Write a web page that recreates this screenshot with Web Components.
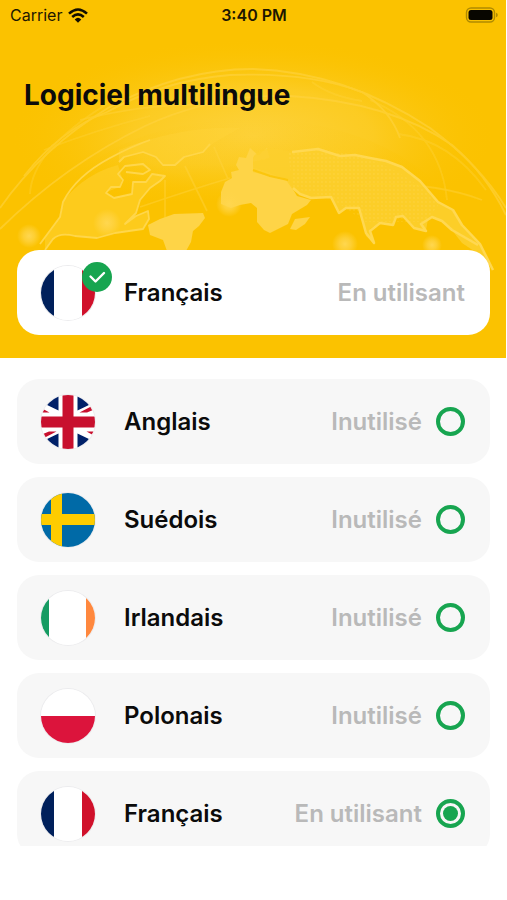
<!DOCTYPE html>
<html lang="fr">
<head>
<meta charset="utf-8">
<meta name="viewport" content="width=device-width, initial-scale=1">
<title>Logiciel multilingue</title>
<style>
  body { margin: 0; background: #fff; color: #0b0b0b; font-family: Inter, "Liberation Sans", sans-serif; }
</style>
</head>
<body>
<language-screen>
  <status-bar slot="status" carrier="Carrier" time="3:40 PM"></status-bar>
  <span slot="title">Logiciel multilingue</span>
  <language-card slot="current" flag="fr" current>
    Français<span slot="state">En utilisant</span>
  </language-card>
  <language-card flag="gb" choice>Anglais<span slot="state">Inutilisé</span></language-card>
  <language-card flag="se" choice>Suédois<span slot="state">Inutilisé</span></language-card>
  <language-card flag="ie" choice>Irlandais<span slot="state">Inutilisé</span></language-card>
  <language-card flag="pl" choice>Polonais<span slot="state">Inutilisé</span></language-card>
  <language-card flag="fr" choice checked>Français<span slot="state">En utilisant</span></language-card>
</language-screen>

<script>
const FLAGS = {
  fr: `<svg viewBox="0 0 54 54"><path fill="#fff" d="M0 0h54v54H0z"/><path fill="#00205b" d="M0 0h13v54H0z"/><path fill="#d0112b" d="M41 0h13v54H41z"/></svg>`,
  ie: `<svg viewBox="0 0 54 54"><path fill="#fff" d="M0 0h54v54H0z"/><path fill="#169b62" d="M0 0h8v54H0z"/><path fill="#ff883e" d="M45 0h9v54h-9z"/></svg>`,
  pl: `<svg viewBox="0 0 54 54"><path fill="#fff" d="M0 0h54v27H0z"/><path fill="#dc143c" d="M0 27h54v27H0z"/></svg>`,
  se: `<svg viewBox="0 0 54 54"><path fill="#006aa7" d="M0 0h54v54H0z"/><path fill="#fecc00" d="M10 0h11v54H10zM0 21h54v11H0z"/></svg>`,
  gb: `<svg viewBox="0 0 54 54"><path fill="#fff" d="M0 0h54v54H0z"/>
    <path fill="#012169" d="M17.500-3v18.500L4 9V-3zM36.500-3v18.500L50 9V-3zM17.500 57V38.500L4 45v12zM36.500 57V38.500L50 45v12z"/>
    <path fill="#c8102e" d="M0 17.500L3 14.500 8.500 17.500zM38.500 17.500L52 10.500V15L46 17.500zM15.500 36.500L2 43.500V39L8 36.500zM45.500 36.500H54L51 39.500z"/>
    <path d="M27 0v54M0 27h54" stroke="#c8102e" stroke-width="11"/></svg>`
};

class StatusBar extends HTMLElement {
  connectedCallback() {
    this.attachShadow({ mode: 'open' }).innerHTML = `
      <style>
        :host { display: grid; grid-template-columns: 1fr auto 1fr; align-items: center; height: 30px; padding: 0 8px 0 10px; font-size: 16px; line-height: 20px; color: #1d1700; }
        .carrier { display: flex; align-items: center; gap: 6px; }
        .time { font-weight: 600; }
        .battery { justify-self: end; }
        svg { display: block; }
      </style>
      <span class="carrier"><span>${this.getAttribute('carrier')}</span>
        <svg width="20" height="15" viewBox="0 0 20 15" fill="none" stroke="#120e00" stroke-width="2.6" aria-label="Wi-Fi">
          <path d="M1 5.6Q10-2.6 19 5.6"/><path d="M4.2 9Q10 3.8 15.800 9"/><path d="M6.700 11.400Q10 8.300 13.300 11.400L10 14.800z" fill="#120e00" stroke="none"/>
        </svg></span>
      <span class="time">${this.getAttribute('time')}</span>
      <svg class="battery" width="33" height="16" viewBox="0 0 33 16" aria-label="Batterie">
        <rect x="1.500" y="1" width="28" height="14" rx="4.500" fill="none" stroke="#b08b00" stroke-width="1.400"/>
        <rect x="3.500" y="3" width="24" height="10" rx="2.500" fill="#080600"/>
        <path d="M31 5.800q1.800.5 1.800 2.200t-1.800 2.200z" fill="#b08b00"/>
      </svg>`;
  }
}
customElements.define('status-bar', StatusBar);

class CountryFlag extends HTMLElement {
  connectedCallback() {
    this.attachShadow({ mode: 'open' }).innerHTML = `
      <style>
        :host { display: block; width: 54px; height: 54px; border-radius: 50%; overflow: hidden; box-shadow: 0 0 0 1px #ececee; }
        svg { display: block; width: 100%; height: 100%; }
      </style>${FLAGS[this.getAttribute('code')]}`;
  }
}
customElements.define('country-flag', CountryFlag);

class LanguageCard extends HTMLElement {
  connectedCallback() {
    const choice = this.hasAttribute('choice');
    this.attachShadow({ mode: 'open' }).innerHTML = `
      <style>
        :host { display: block; flex: none; border-radius: 22px; background: #f7f7f7; }
        :host([current]) { background: #fff; }
        .row { display: flex; align-items: center; min-height: 85px; padding: 0 25px 0 24px; font-size: 24px; line-height: 32px; font-weight: 600; }
        .flag { position: relative; margin-right: 29px; }
        .badge { position: absolute; top: -4px; right: -17px; width: 30px; height: 30px; display: block; }
        .name { flex: 1; }
        .state { color: #b9b9b9; }
        input { appearance: none; width: 29px; height: 29px; margin: 0 0 0 14px; border: 4px solid #17a550; border-radius: 50%; display: grid; place-items: center; }
        input:checked::before { content: ""; width: 15px; height: 15px; border-radius: 50%; background: #17a550; }
      </style>
      <${choice ? 'label' : 'div'} class="row">
        <span class="flag"><country-flag code="${this.getAttribute('flag')}"></country-flag>
        ${this.hasAttribute('current') ? `<svg class="badge" viewBox="0 0 30 30"><circle cx="15" cy="15" r="15" fill="#17a550"/><path d="M8.500 14.500l5 5L22 11" fill="none" stroke="#fff" stroke-width="2.400" stroke-linecap="round" stroke-linejoin="round"/></svg>` : ''}</span>
        <span class="name"><slot></slot></span>
        <span class="state"><slot name="state"></slot></span>
        ${choice ? `<input type="radio" name="language"${this.hasAttribute('checked') ? ' checked' : ''}>` : ''}
      </${choice ? 'label' : 'div'}>`;
    const input = this.shadowRoot.querySelector('input');
    if (input) {
      input.setAttribute('aria-label', this.firstChild.textContent.trim());
      input.addEventListener('change', () => this.dispatchEvent(new CustomEvent('language-pick', { bubbles: true })));
    }
  }
  clear() { const i = this.shadowRoot.querySelector('input'); if (i) i.checked = false; }
}
customElements.define('language-card', LanguageCard);

class GlobeArt extends HTMLElement {
  connectedCallback() {
    this.attachShadow({ mode: 'open' }).innerHTML = `
      <style>:host { display: block; } svg { display: block; width: 100%; height: 100%; }</style>
      <svg viewBox="0 0 506 358" preserveAspectRatio="xMidYMin slice" aria-hidden="true">
        <defs>
          <radialGradient id="glow" gradientUnits="userSpaceOnUse" cx="253" cy="140" r="240" gradientTransform="translate(0 80) scale(1 .4)">
            <stop offset="0" stop-color="#fdd23c"/><stop offset=".5" stop-color="#fccd28" stop-opacity=".85"/><stop offset="1" stop-color="#fbc403" stop-opacity="0"/>
          </radialGradient>
          <linearGradient id="sea" x1="0" y1="0" x2="0" y2="1">
            <stop offset="0" stop-color="#fbc403" stop-opacity="0"/><stop offset=".3" stop-color="#fbc403" stop-opacity=".2"/><stop offset=".55" stop-color="#fbc200"/>
          </linearGradient>
          <radialGradient id="spot"><stop offset="0" stop-color="#ffd750"/><stop offset=".45" stop-color="#ffd54a" stop-opacity=".7"/><stop offset="1" stop-color="#ffd54a" stop-opacity="0"/></radialGradient>
          <pattern id="dots" width="4" height="4" patternUnits="userSpaceOnUse"><circle cx="2" cy="2" r=".7" fill="#ffdc62" opacity=".45"/></pattern>
          <filter id="soft" x="-10%" y="-10%" width="120%" height="120%"><feGaussianBlur stdDeviation=".5"/></filter>
        </defs>
        <ellipse cx="253" cy="136" rx="250" ry="100" fill="url(#glow)"/>
        <path d="M38 252Q60 125 253 118Q440 125 492 270z" fill="url(#sea)"/>
        <g filter="url(#soft)">
          <g fill="none" stroke="#ffd340" stroke-width="1.800" opacity=".6">
            <path d="M0 208Q42 148 108 108Q180 69 253 69Q345 72 430 128Q480 165 506 208"/>
            <path d="M0 229Q65 165 145 126Q215 94 290 96Q390 102 452 145Q486 174 506 215"/>
            <path d="M24 176Q60 130 107 112Q165 80 230 75Q310 72 362 92Q390 110 400 138"/>
            <path d="M30 194Q32 150 107 104M44 150Q96 130 150 116M370 100Q440 130 447 200M398 134Q450 140 486 190M312 82Q330 96 362 101" opacity=".6"/>
            <path d="M140 207Q190 190 230 178M185 166L207 211M214 147L228 179M165 180V219M350 185Q430 180 482 200M80 120Q160 100 230 106" opacity=".7"/>
          </g>
          <path d="M45 250L52 240Q60 232 72 235L97 238L115 233L143 229L149 219L148 211L136 216L125 224L136 213L140 200L150 188L160 181L165 176L152 174L146 182L133 182L132 194L114 197L106 192L120 187L122 178L118 165Q85 174 64 200L60 217L45 238z" fill="#fdcf2c" opacity=".65"/>
          <path d="M45 250L53 239Q60 232 75 236L97 238L115 233L143 229L149 219L148 211L136 216L125 224L136 213L140 200L150 188L160 181L165 176L152 174L146 182L133 182L132 194L114 198L106 193L111 187L120 187L123 180L118 174L125 166L143 164L150 170L143 174L126 172M40 244L60 217L63 202Q76 176 110 158Q130 147 150 140M119 162L124 157L143 152L156 157L163 165L175 165L184 157L203 152L210 144" fill="none" stroke="#ffd851" stroke-width="1.800" stroke-linejoin="round" opacity=".9"/>
          <path d="M119 162L124 157L143 152L156 157L163 165L175 165L184 157L203 152L215 142L240 128Q180 126 119 150z" fill="#ffd340" opacity=".35"/>
          <path d="M148 225L160 219L174 214L203 213L205 218L199 226L193 231L191 242L186 251H167L163 240L150 235z" fill="#fed446"/>
          <path d="M221 192L225 182L232 178L231 172L239 170L236 165L239 157L246 158L250 148L258 155L267 148L270 158L253 162L254 168L268 172L288 181L297 196L311 200L307 205L292 214L288 224L270 233L264 230L257 222L257 208L251 203L240 205L231 208L221 204z" fill="#fed446"/>
          <path d="M290 229L295 219L310 217L305 224L296 230z" fill="#fed446"/>
          <path d="M253 158Q260 143 292 152L318 149L340 156L355 155L370 158L386 161L402 167L420 181L438 202L453 210L462 225L480 244L493 270L480 255L462 243L448 225L435 217L428 219L426 230L414 228L403 216L395 217L392 225L380 222L370 229L374 243L366 236L359 208L345 208L339 214L331 198L311 198L293 190L286 180L253 172z" fill="#fdcf2e" opacity=".9"/>
          <path d="M288 152Q370 140 440 203L425 222L365 222L331 198L293 188z" fill="url(#dots)"/>
          <path d="M292 152L318 149L340 156L355 155L370 158L386 161L402 167L420 181L438 202L453 210L462 225L480 244L493 270M293 188L300 194L311 198L331 197L339 213L346 208L359 208L366 233L374 243L370 231L380 223L393 225L396 217L403 216L414 228L426 231L421 224L432 217L442 221L452 230L478 245" fill="none" stroke="#ffd851" stroke-width="2.500" stroke-linejoin="round"/>
          <path d="M253 170L270 176L288 180" stroke="#fbc60d" stroke-width="2" fill="none"/>
        </g>
        <g fill="url(#spot)"><circle cx="29" cy="236" r="12"/><circle cx="107" cy="223" r="14"/><circle cx="229" cy="204" r="13"/><circle cx="345" cy="244" r="13"/><circle cx="432" cy="245" r="10"/></g>
      </svg>`;
  }
}
customElements.define('globe-art', GlobeArt);

class LanguageScreen extends HTMLElement {
  connectedCallback() {
    this.attachShadow({ mode: 'open' }).innerHTML = `
      <style>
        :host { display: flex; flex-direction: column; height: 100vh; box-sizing: border-box; padding-bottom: 54px; }
        header { position: relative; flex: none; margin-right: 1px; background: #fbc200; overflow: hidden; }
        globe-art { position: absolute; inset: 0; }
        .content { position: relative; }
        h1 { margin: 0; padding: 45px 24px 135px; font-size: 28px; line-height: 40px; font-weight: 700; }
        .current { padding: 0 16px 23px 17px; }
        main { flex: 1; min-height: 0; margin-top: 21px; padding: 0 17px; display: flex; flex-direction: column; gap: 13px; overflow-y: auto; scrollbar-width: none; }
      </style>
      <header>
        <globe-art></globe-art>
        <div class="content">
          <slot name="status"></slot>
          <h1><slot name="title"></slot></h1>
          <div class="current"><slot name="current"></slot></div>
        </div>
      </header>
      <main><slot></slot></main>`;
    this.addEventListener('language-pick', e => {
      for (const card of this.querySelectorAll('language-card')) if (card !== e.target) card.clear();
    });
  }
}
customElements.define('language-screen', LanguageScreen);
</script>
</body>
</html>
